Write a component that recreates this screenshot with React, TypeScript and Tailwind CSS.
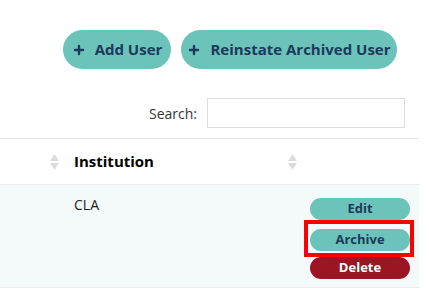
import { Plus } from "lucide-react";

function SortIcon() {
  return (
    <svg width="9" height="16" viewBox="0 0 9 16" className="shrink-0">
      <path d="M4.5 0 L9 7 H0 Z" fill="#dcdcdc" />
      <path d="M0 9 H9 L4.5 16 Z" fill="#dcdcdc" />
    </svg>
  );
}

export default function App() {
  const font = { fontFamily: '"Open Sans", "Liberation Sans", sans-serif' };
  return (
    <div className="h-[288px] w-[429px] overflow-hidden bg-white pt-[30px]" style={font}>
      <div className="flex justify-end gap-[10px] pr-[32px]">
        <button className="flex h-[39px] w-[108px] items-center justify-center gap-[9px] rounded-full bg-[#6cc3b9] text-[15px] font-bold text-[#1b3a5c]">
          <Plus size={14} strokeWidth={4} />
          Add User
        </button>
        <button className="flex h-[39px] w-[216px] items-center justify-center gap-[9px] rounded-full bg-[#6cc3b9] text-[15px] font-bold text-[#1b3a5c]">
          <Plus size={14} strokeWidth={4} />
          Reinstate Archived User
        </button>
      </div>

      <div className="mt-[29px] flex items-center justify-end gap-[10px] pr-[24px]">
        <span className="text-[14px] text-[#333]">Search:</span>
        <input className="h-[30px] w-[198px] border border-[#dddddd] outline-none" />
      </div>

      <div className="mt-[10px] w-[419px] border-t border-[#e6e6e6]">
        <div className="flex h-[46px] items-center border-b border-[#ececec]">
          <div className="flex w-[64px] justify-end pr-[5px]">
            <SortIcon />
          </div>
          <div className="flex flex-1 items-center justify-between pl-[10px] pr-[3px]">
            <span className="text-[15px] font-bold text-black">Institution</span>
            <SortIcon />
          </div>
          <div className="w-[119px]" />
        </div>

        <div className="flex h-[103px] border-b border-[#ececec] bg-[#f4f9f9]">
          <div className="w-[64px]" />
          <div className="flex-1 pl-[10px] pt-[7px]">
            <span className="text-[14px] text-[#222]">CLA</span>
          </div>
          <div className="flex w-[119px] flex-col gap-[6px] pl-[10px] pr-[9px] pt-[13px]">
            <button className="h-[22px] w-full rounded-full bg-[#6cc3b9] text-[13px] font-bold text-[#1b3a5c]">
              Edit
            </button>
            <div className="relative">
              <button className="h-[22px] w-full rounded-full bg-[#6cc3b9] text-[13px] font-bold text-[#1b3a5c]">
                Archive
              </button>
              <div className="pointer-events-none absolute -bottom-[6px] -left-[6px] -right-[4px] -top-[6px] border-4 border-[#ff0000]" />
            </div>
            <button className="h-[22px] w-full rounded-full bg-[#9b1523] text-[13px] font-bold text-white">
              Delete
            </button>
          </div>
        </div>
      </div>
    </div>
  );
}
